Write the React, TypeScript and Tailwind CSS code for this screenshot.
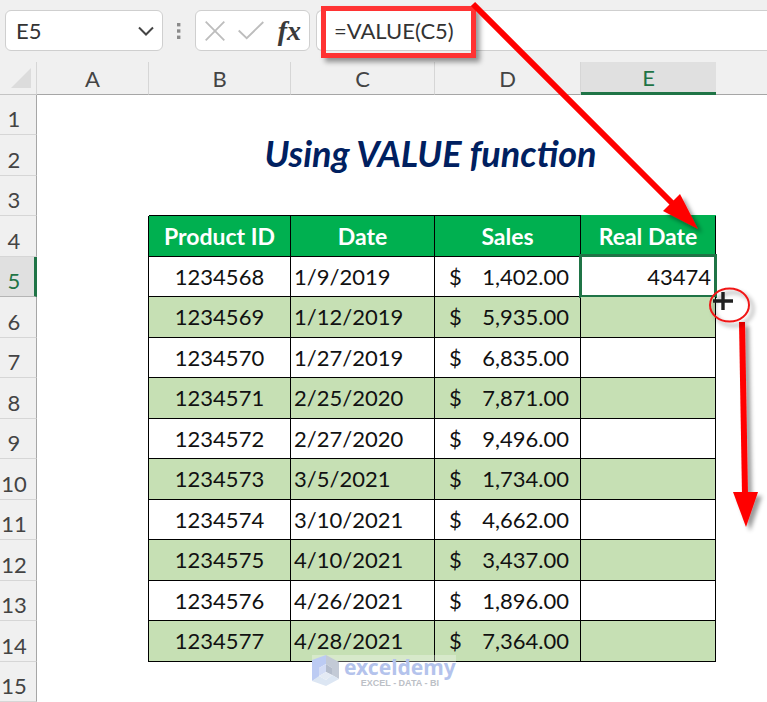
import { useState } from "react";

const columns = ["A", "B", "C", "D", "E"];

const headings = ["Product ID", "Date", "Sales", "Real Date"];

const records = [
  { id: "1234568", date: "1/9/2019", sales: "1,402.00", real: "43474" },
  { id: "1234569", date: "1/12/2019", sales: "5,935.00", real: "" },
  { id: "1234570", date: "1/27/2019", sales: "6,835.00", real: "" },
  { id: "1234571", date: "2/25/2020", sales: "7,871.00", real: "" },
  { id: "1234572", date: "2/27/2020", sales: "9,496.00", real: "" },
  { id: "1234573", date: "3/5/2021", sales: "1,734.00", real: "" },
  { id: "1234574", date: "3/10/2021", sales: "4,662.00", real: "" },
  { id: "1234575", date: "4/10/2021", sales: "3,437.00", real: "" },
  { id: "1234576", date: "4/26/2021", sales: "1,896.00", real: "" },
  { id: "1234577", date: "4/28/2021", sales: "7,364.00", real: "" },
];

function RowHeader({ row, active = false }: { row: number; active?: boolean }) {
  return (
    <th
      scope="row"
      className={
        active
          ? "border-r-3 border-b border-r-[#1f7446] border-b-[#b5b5b5] bg-[#e0e0e0] pr-1.5 pb-px align-bottom text-[22px] leading-7 font-normal text-[#1f7446]"
          : "border-r border-b border-r-[#a6a6a6] border-b-[#d6d6d6] bg-[#f0f0f0] pr-2 pb-px align-bottom text-[22px] leading-7 font-normal text-[#444444]"
      }
    >
      {row}
    </th>
  );
}

function Toolbar() {
  const [cell, setCell] = useState("E5");
  const [formula, setFormula] = useState("=VALUE(C5)");

  return (
    <div className="flex h-[62px] items-start pt-2.5 pl-[5px]">
      <div className="flex h-[41px] w-[158px] items-center rounded-md border border-[#cfcfcf] bg-white pr-2">
        <input
          aria-label="Name box"
          value={cell}
          onChange={(e) => setCell(e.target.value)}
          className="w-full min-w-0 pl-2.5 text-[22px] leading-7 text-[#333333] outline-none"
        />
        <button aria-label="Show names" className="shrink-0">
          <svg width="16" height="10" viewBox="0 0 16 10" fill="none" stroke="#444444" strokeWidth="2">
            <path d="M1 1.5 8 8.5 15 1.5" />
          </svg>
        </button>
      </div>

      <div className="flex h-[41px] w-8 items-center justify-center">
        <svg width="4" height="16" viewBox="0 0 4 16" fill="#8a8a8a">
          <rect width="3.4" height="3.4" />
          <rect y="6.3" width="3.4" height="3.4" />
          <rect y="12.6" width="3.4" height="3.4" />
        </svg>
      </div>

      <div className="flex h-[41px] w-[115px] items-center justify-between rounded-md border border-[#cfcfcf] bg-white pr-2 pl-[9px]">
        <button aria-label="Cancel">
          <svg width="20" height="20" viewBox="0 0 20 20" fill="none" stroke="#bdbdbd" strokeWidth="1.8">
            <path d="M.7.7 19.3 19.3M19.3.7.7 19.3" />
          </svg>
        </button>
        <button aria-label="Enter">
          <svg width="26" height="20" viewBox="0 0 26 20" fill="none" stroke="#bdbdbd" strokeWidth="1.8">
            <path d="M.7 9.5 8.7 17.2 25.3 1" />
          </svg>
        </button>
        <button
          aria-label="Insert function"
          className="font-['Liberation_Serif',serif] text-[28px] leading-8 font-bold text-[#3a3a3a] italic"
        >
          fx
        </button>
      </div>

      <div className="relative ml-1.5 h-[41px] min-w-0 flex-1 rounded-l-md border border-r-0 border-[#cfcfcf] bg-white">
        <input
          aria-label="Formula bar"
          value={formula}
          onChange={(e) => setFormula(e.target.value)}
          className="h-full w-full pl-[17px] text-[22px] leading-7 text-[#333333] outline-none"
        />
        <div className="pointer-events-none absolute -top-[5px] left-1 h-[52px] w-[155px] border-[5px] border-[#ff3333] shadow-[4px_4px_5px_rgba(0,0,0,0.4)]" />
      </div>
    </div>
  );
}

function Annotations() {
  return (
    <svg
      className="pointer-events-none absolute top-0 left-0"
      width="767"
      height="702"
      viewBox="0 0 767 702"
      aria-hidden="true"
    >
      <defs>
        <filter id="drop" x="-20%" y="-20%" width="150%" height="150%">
          <feDropShadow dx="4" dy="4" stdDeviation="2" floodOpacity="0.4" />
        </filter>
      </defs>
      <path d="M473 4 675 206" stroke="#ff0000" strokeWidth="6" />
      <path d="M680 194 663 211 698 229Z" fill="#ff0000" filter="url(#drop)" />
      <g filter="url(#drop)">
        <path d="M742 322 745 495" stroke="#ff0000" strokeWidth="6" fill="none" />
        <path d="M733 492H758L746 527Z" fill="#ff0000" />
      </g>
      <path d="M713 301H733M723 292V310" stroke="#222222" strokeWidth="3.4" />
      <ellipse cx="729.5" cy="305" rx="19.5" ry="16.5" fill="none" stroke="#f01818" strokeWidth="2" filter="url(#drop)" />
    </svg>
  );
}

function Watermark() {
  return (
    <div className="absolute top-[655px] left-[312px] flex items-start gap-1 bg-white/30">
      <svg width="28" height="32" viewBox="0 0 28 32">
        <path d="M0 5 14 0V9L7 13V22L0 26Z" fill="#bccbf3" />
        <path d="M14 0 27 7V24L20 20V13L14 9Z" fill="#c3cad6" />
        <path d="M0 26 7 21 14 25 20 20 27 24 14 31Z" fill="#dce6f3" />
        <path d="M7 13 14 9V17L7 21Z" fill="#d3dcf5" />
        <path d="M14 9 20 13V20L14 17Z" fill="#b4bccb" />
        <path d="M7 21 14 17 20 20 14 25Z" fill="#e4eaf4" />
      </svg>
      <div className="flex flex-col items-center">
        <span className="font-['Noto_Sans',sans-serif] text-[21px] leading-6 font-bold text-[#b4c3ec]">
          exceldemy
        </span>
        <span className="font-['Liberation_Sans',sans-serif] text-[9px] leading-2 font-bold text-[#bcc0c6]">
          EXCEL - DATA - BI
        </span>
      </div>
    </div>
  );
}

function Sheet() {
  return (
    <table className="w-full table-fixed border-separate border-spacing-0 bg-white">
      <colgroup>
        <col className="w-[37px]" />
        <col className="w-[112px]" />
        <col className="w-[142px]" />
        <col className="w-[144px]" />
        <col className="w-[146px]" />
        <col className="w-[135px]" />
        <col />
      </colgroup>
      <thead>
        <tr className="h-[33px] bg-[#f0f0f0]">
          <td className="border-r border-b border-r-[#d6d6d6] border-b-[#c4c4c4]">
            <svg className="ml-[11px]" width="20" height="20" viewBox="0 0 20 20" fill="#dcdcdc">
              <path d="M20 0V20H0Z" />
            </svg>
          </td>
          {columns.map((name) => (
            <th
              key={name}
              scope="col"
              className={
                name === "E"
                  ? "border-b-3 border-[#1f7446] bg-[#e0e0e0] pt-0.5 text-[22px] leading-7 font-normal text-[#1f7446]"
                  : "border-r border-b border-r-[#d6d6d6] border-b-[#a6a6a6] pt-0.5 text-[22px] leading-7 font-normal text-[#444444]"
              }
            >
              {name}
            </th>
          ))}
          <td className="border-b border-[#a6a6a6]" />
        </tr>
      </thead>
      <tbody className="text-[22px] leading-7 text-[#111111]">
        <tr className="h-10">
          <RowHeader row={1} />
          <td colSpan={6} />
        </tr>
        <tr className="h-[41px]">
          <RowHeader row={2} />
          <td />
          <td colSpan={4} className="pr-1 text-center align-top text-[36px] leading-9 font-bold text-[#002060] italic">
            Using VALUE function
          </td>
          <td />
        </tr>
        <tr className="h-10">
          <RowHeader row={3} />
          <td />
          <td colSpan={3} className="border-b border-black" />
          <td className="border-b border-[#00b050]" />
          <td />
        </tr>
        <tr className="h-[41px]">
          <RowHeader row={4} />
          <td className="border-r border-black" />
          {headings.map((text) => (
            <th
              key={text}
              scope="col"
              className="border-r border-b border-black bg-[#00b050] text-[23px] font-bold text-white"
            >
              {text}
            </th>
          ))}
          <td />
        </tr>
        {records.map((record, i) => {
          const cell = i % 2 ? "border-r border-b border-black bg-[#c6e0b4]" : "border-r border-b border-black";
          return (
            <tr key={record.id} className={i % 2 ? "h-[41px]" : "h-10"}>
              <RowHeader row={i + 5} active={i === 0} />
              <td className="border-r border-black" />
              <td className={`${cell} text-center`}>{record.id}</td>
              <td className={`${cell} pl-[3px]`}>{record.date}</td>
              <td className={cell}>
                <div className="flex justify-between pr-[11px] pl-3.5">
                  <span>$</span>
                  <span>{record.sales}</span>
                </div>
              </td>
              <td className={`${cell} relative pr-1 text-right`}>
                {record.real}
                {i === 0 && (
                  <div className="absolute -top-[3px] -right-0.5 -bottom-0.5 -left-0.5 border-3 border-[#1f7446]" />
                )}
              </td>
              <td />
            </tr>
          );
        })}
        <tr className="h-10">
          <RowHeader row={15} />
          <td colSpan={6} />
        </tr>
      </tbody>
    </table>
  );
}

function App() {
  return (
    <main className="relative min-h-screen overflow-hidden bg-[#f0f0f0] font-['Lato',sans-serif]">
      <Toolbar />
      <Sheet />
      <Watermark />
      <Annotations />
    </main>
  );
}

export default App;
